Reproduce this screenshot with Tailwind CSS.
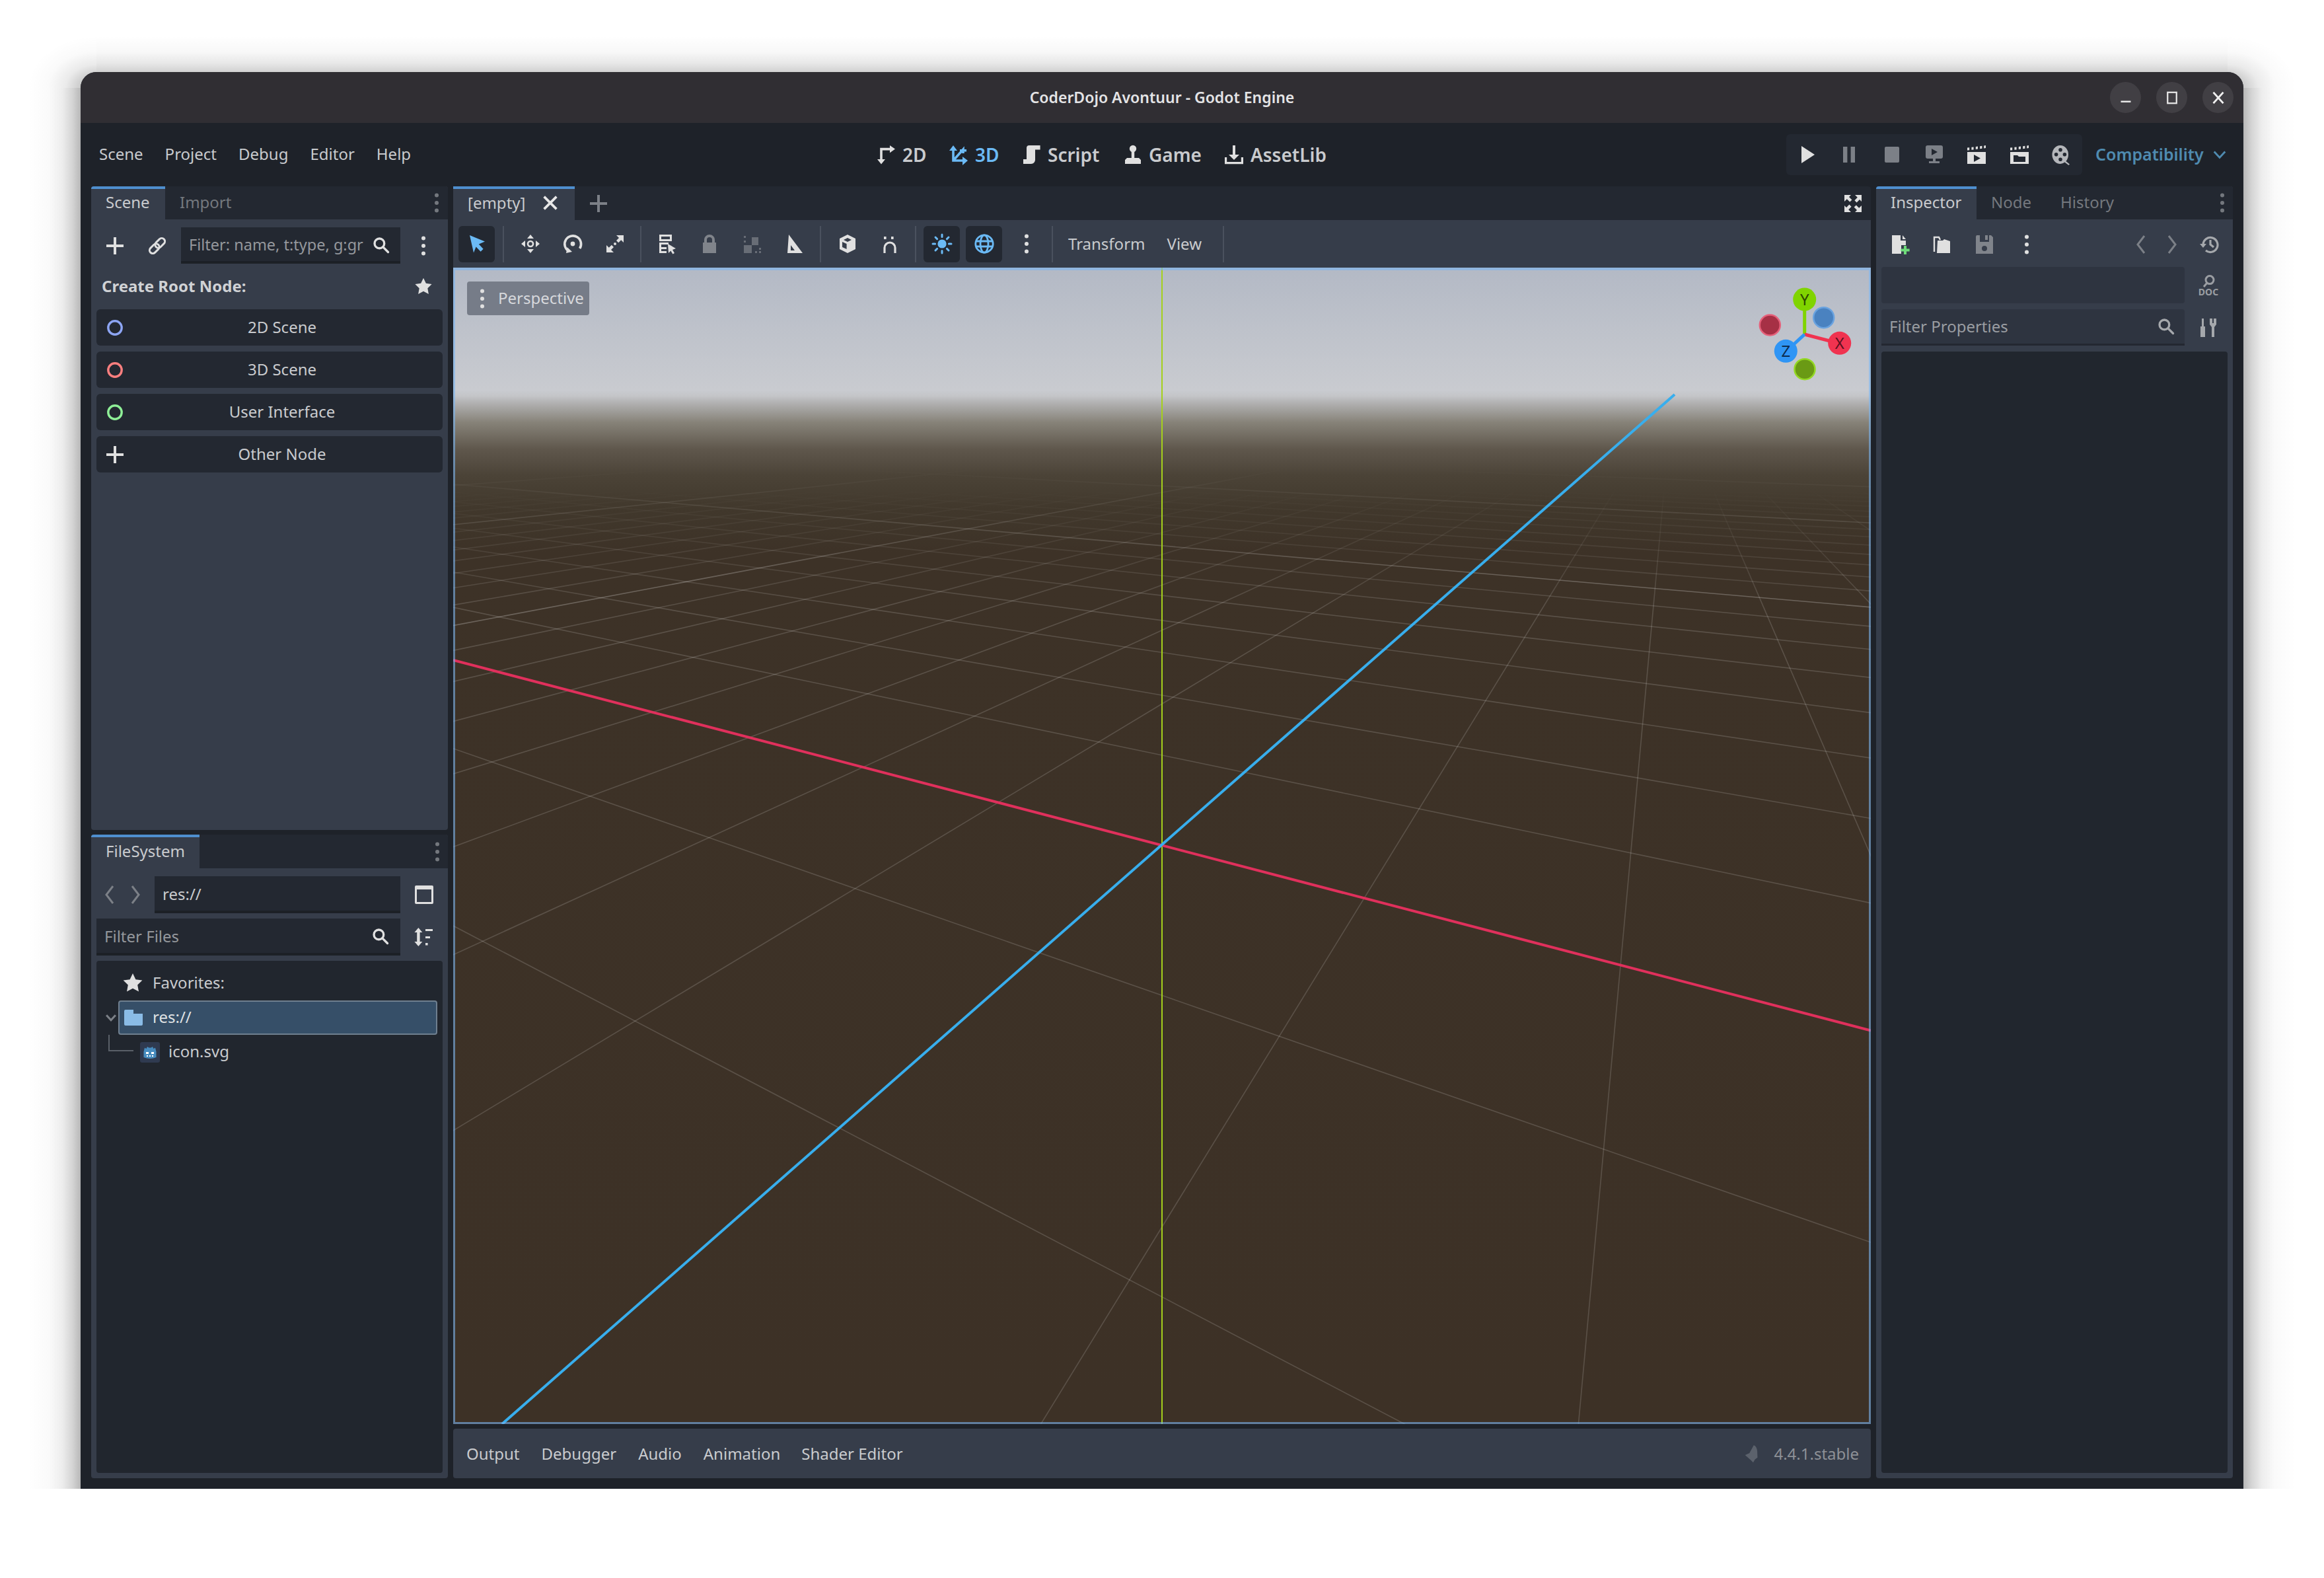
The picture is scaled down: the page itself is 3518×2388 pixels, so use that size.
<!DOCTYPE html>
<html lang="en">
<head>
  <meta charset="UTF-8">
  <title>CoderDojo Avontuur - Godot Engine</title>
  <script src="https://cdn.jsdelivr.net/npm/@tailwindcss/browser@4"></script>
</head>
<body class="relative bg-white font-['Noto_Sans',sans-serif] text-[24px] text-[#c9cbce]">
  <!-- shared icons, 16 unit grid -->
  <svg class="hidden">
    <symbol id="plus" viewBox="0 0 16 16"><path fill="currentColor" d="M7 1.5h2V7h5.5v2H9v5.5H7V9H1.5V7H7z"/></symbol>
    <symbol id="dots" viewBox="0 0 16 16"><g fill="currentColor"><circle cx="8" cy="2.2" r="1.5"/><circle cx="8" cy="8" r="1.5"/><circle cx="8" cy="13.8" r="1.5"/></g></symbol>
    <symbol id="search" viewBox="0 0 16 16"><g fill="none" stroke="currentColor" stroke-width="1.9"><circle cx="6.5" cy="6.5" r="4.2"/><path stroke-linecap="round" d="M9.8 9.8 14 14"/></g></symbol>
    <symbol id="star" viewBox="0 0 16 16"><path fill="currentColor" d="M8 1l2.2 4.6 5 .7-3.6 3.5.9 5L8 12.4l-4.5 2.4.9-5L.8 6.3l5-.7z"/></symbol>
    <symbol id="ring" viewBox="0 0 16 16"><circle cx="8" cy="8" r="5.1" fill="none" stroke="currentColor" stroke-width="1.7"/></symbol>
    <symbol id="left" viewBox="0 0 16 16"><path fill="none" stroke="currentColor" stroke-width="1.5" d="M10.5 1.5 5.5 8l5 6.5"/></symbol>
    <symbol id="right" viewBox="0 0 16 16"><path fill="none" stroke="currentColor" stroke-width="1.5" d="M5.5 1.5l5 6.5-5 6.5"/></symbol>
    <symbol id="clapper" viewBox="0 0 16 16"><path fill="currentColor" d="M1 6h14v9H1z"/><path fill="currentColor" d="M1 2.8l1.6-.2v2L1 4.800zM4.200 2.400l1.600-.2v2l-1.600.2zM7.400 2l1.600-.2v2l-1.600.2zM10.600 1.600l1.600-.2v2l-1.600.2zM13.600 1.200l1.400-.2v2l-1.400.2z"/></symbol>
  </svg>

  <!-- window drop shadow, gradient strips round the window -->
  <svg class="absolute left-0 top-0 h-[2388px] w-[3518px]" viewBox="0 0 3518 2388">
    <defs>
      <linearGradient id="shL" x1="1" y1="0" x2="0" y2="0"><stop offset="0" stop-opacity="0.28"/><stop offset="0.15" stop-opacity="0.17"/><stop offset="0.35" stop-opacity="0.07"/><stop offset="0.6" stop-opacity="0.02"/><stop offset="1" stop-opacity="0"/></linearGradient>
      <linearGradient id="shR" x1="0" y1="0" x2="1" y2="0"><stop offset="0" stop-opacity="0.28"/><stop offset="0.15" stop-opacity="0.17"/><stop offset="0.35" stop-opacity="0.07"/><stop offset="0.6" stop-opacity="0.02"/><stop offset="1" stop-opacity="0"/></linearGradient>
      <linearGradient id="shT" x1="0" y1="1" x2="0" y2="0"><stop offset="0" stop-opacity="0.18"/><stop offset="0.25" stop-opacity="0.09"/><stop offset="0.55" stop-opacity="0.03"/><stop offset="1" stop-opacity="0"/></linearGradient>
      <linearGradient id="shB" x1="0" y1="0" x2="0" y2="1"><stop offset="0" stop-opacity="0.3"/><stop offset="0.12" stop-opacity="0.17"/><stop offset="0.3" stop-opacity="0.09"/><stop offset="0.55" stop-opacity="0.04"/><stop offset="0.8" stop-opacity="0.015"/><stop offset="1" stop-opacity="0"/></linearGradient>
      <radialGradient id="shTL" cx="1" cy="1" r="1"><stop offset="0.24" stop-opacity="0.2"/><stop offset="0.45" stop-opacity="0.08"/><stop offset="0.7" stop-opacity="0.02"/><stop offset="1" stop-opacity="0"/></radialGradient>
      <radialGradient id="shTR" cx="0" cy="1" r="1"><stop offset="0.24" stop-opacity="0.2"/><stop offset="0.45" stop-opacity="0.08"/><stop offset="0.7" stop-opacity="0.02"/><stop offset="1" stop-opacity="0"/></radialGradient>
      <radialGradient id="shBL" cx="1" cy="0" r="1"><stop offset="0" stop-opacity="0.26"/><stop offset="0.15" stop-opacity="0.14"/><stop offset="0.35" stop-opacity="0.06"/><stop offset="0.6" stop-opacity="0.018"/><stop offset="1" stop-opacity="0"/></radialGradient>
      <radialGradient id="shBR" cx="0" cy="0" r="1"><stop offset="0" stop-opacity="0.26"/><stop offset="0.15" stop-opacity="0.14"/><stop offset="0.35" stop-opacity="0.06"/><stop offset="0.6" stop-opacity="0.018"/><stop offset="1" stop-opacity="0"/></radialGradient>
    </defs>
    <rect x="42" y="133" width="80" height="2120" fill="url(#shL)"/>
    <rect x="3396" y="133" width="80" height="2120" fill="url(#shR)"/>
    <rect x="146" y="54" width="3226" height="55" fill="url(#shT)"/>
    <rect x="122" y="2253" width="3274" height="130" fill="url(#shB)"/>
    <rect x="42" y="54" width="104" height="79" fill="url(#shTL)"/>
    <rect x="3372" y="54" width="104" height="79" fill="url(#shTR)"/>
    <rect x="42" y="2253" width="80" height="130" fill="url(#shBL)"/>
    <rect x="3396" y="2253" width="80" height="130" fill="url(#shBR)"/>
  </svg>

  <div class="relative pl-[122px] pt-[109px]">
    <div class="flex h-[2144px] w-[3274px] flex-col overflow-hidden rounded-t-[24px] bg-[#1e2229]">

      <!-- title bar -->
      <div class="relative flex h-[77px] shrink-0 items-center justify-center bg-[#302e33]">
        <span class="text-[23px] font-semibold text-[#e4e4e6]">CoderDojo Avontuur - Godot Engine</span>
        <div class="absolute right-[15px] top-[15px] flex gap-[23px]">
          <div class="flex h-[47px] w-[47px] items-center justify-center rounded-full bg-[#413f44]"><svg class="h-[24px] w-[24px]" viewBox="0 0 16 16"><path fill="#e8e8e8" d="M3 11h10v1.600H3z"/></svg></div>
          <div class="flex h-[47px] w-[47px] items-center justify-center rounded-full bg-[#413f44]"><svg class="h-[24px] w-[24px]" viewBox="0 0 16 16"><rect x="3.500" y="2.500" width="9" height="11" fill="none" stroke="#e8e8e8" stroke-width="1.500"/></svg></div>
          <div class="flex h-[47px] w-[47px] items-center justify-center rounded-full bg-[#413f44]"><svg class="h-[24px] w-[24px]" viewBox="0 0 16 16"><path fill="none" stroke="#f0f0f0" stroke-width="1.800" d="M3 2.500l10 11M13 2.500l-10 11"/></svg></div>
        </div>
      </div>

      <!-- menu bar -->
      <div class="flex h-[96px] shrink-0 items-center">
        <div class="flex w-[1204px] shrink-0 gap-[33px] pb-[2px] pl-[28px]">
          <span>Scene</span><span>Project</span><span>Debug</span><span>Editor</span><span>Help</span>
        </div>
        <div class="flex items-center whitespace-nowrap text-[28px] font-semibold">
          <svg class="h-[32px] w-[32px] text-[#e0e0e0]" viewBox="0 0 16 16"><path fill="none" stroke="currentColor" stroke-width="1.800" d="M4 12.500V3.800h7"/><path fill="currentColor" d="M10.500 1l4 2.800-4 2.800zM1 11.500h6l-3 3.800z"/></svg>
          <span class="ml-[8px] w-[69px]">2D</span>
          <svg class="h-[32px] w-[32px] text-[#6bbaf5]" viewBox="0 0 16 16"><path fill="none" stroke="currentColor" stroke-width="1.800" d="M4 5v7.500h7M4 12.500 11.500 4v3"/><path fill="currentColor" d="M4 1l3 4H1zM15 12.500l-4-3v6.500zM9 4h5v1.800H9z"/></svg>
          <span class="ml-[9px] w-[69px] text-[#6bbaf5]">3D</span>
          <svg class="h-[32px] w-[32px] text-[#e0e0e0]" viewBox="0 0 16 16"><path fill="currentColor" d="M6.500 1h8.300v3.300H11V12a3 3 0 0 1-3 3H2V11.500h2.500V3A2 2 0 0 1 6.500 1z"/></svg>
          <span class="ml-[9px] w-[113px]">Script</span>
          <svg class="h-[32px] w-[32px] text-[#e0e0e0]" viewBox="0 0 16 16"><circle cx="8" cy="3.500" r="2.600" fill="currentColor"/><path fill="currentColor" d="M6.900 5h2.200v5.500H6.900zM3.500 10.500h9l1.500 1.500v3H2v-3z"/></svg>
          <span class="ml-[8px] w-[113px]">Game</span>
          <svg class="h-[32px] w-[32px] text-[#e0e0e0]" viewBox="0 0 16 16"><path fill="currentColor" d="M7 1h2v7h3l-4 4-4-4h3z"/><path fill="none" stroke="currentColor" stroke-width="1.600" d="M1.800 10v4.300h12.400V10"/></svg>
          <span class="ml-[9px]">AssetLib</span>
        </div>
        <div class="ml-auto flex h-[62px] w-[448px] items-center justify-between rounded-md bg-[#232831] px-[15px] text-[#e0e0e0]">
          <svg class="h-[32px] w-[32px]" viewBox="0 0 16 16"><path fill="currentColor" d="M4 1.500v13l10-6.500z"/></svg>
          <svg class="h-[32px] w-[32px] text-[#7c8087]" viewBox="0 0 16 16"><path fill="currentColor" d="M3.500 2h3.200v12H3.500zM9.300 2h3.200v12H9.300z"/></svg>
          <svg class="h-[32px] w-[32px] text-[#7c8087]" viewBox="0 0 16 16"><rect x="2.500" y="2" width="11" height="12" rx="1" fill="currentColor"/></svg>
          <svg class="h-[32px] w-[32px] text-[#7c8087]" viewBox="0 0 16 16"><path fill="currentColor" fill-rule="evenodd" d="M3 1h10a1.500 1.500 0 0 1 1.500 1.500v7A1.500 1.500 0 0 1 13 11H9v2h3v1.500H4V13h3v-2H3a1.500 1.500 0 0 1-1.500-1.500v-7A1.500 1.500 0 0 1 3 1zm3 2.500v5l4.500-2.500z"/></svg>
          <svg class="h-[32px] w-[32px]" viewBox="0 0 16 16"><use href="#clapper"/><path fill="#232831" d="M6 8v5.500l5-2.750z"/></svg>
          <svg class="h-[32px] w-[32px]" viewBox="0 0 16 16"><use href="#clapper"/><path fill="#232831" d="M3.500 8.500h3l1 1h5v4h-9z"/></svg>
          <svg class="h-[32px] w-[32px] text-[#b4b6ba]" viewBox="0 0 16 16"><path fill="currentColor" fill-rule="evenodd" d="M7 1a6 7 0 0 1 6 7 6 7 0 0 1-1.800 5l2.800 2.200-.8.800-3-2.300A6 7 0 1 1 7 1zm0 2a1.400 1.400 0 1 0 0 2.800A1.400 1.400 0 0 0 7 3zM3.800 6.500a1.400 1.400 0 1 0 0 2.800 1.400 1.400 0 0 0 0-2.800zm6.400 0a1.400 1.400 0 1 0 0 2.800 1.400 1.400 0 0 0 0-2.800zM7 10.200a1.400 1.400 0 1 0 0 2.800 1.400 1.400 0 0 0 0-2.800z"/></svg>
        </div>
        <div class="ml-[20px] mr-[24px] flex w-[200px] shrink-0 items-center justify-between text-[25px] font-semibold text-[#4f8bb0]">
          <span>Compatibility</span>
          <svg class="h-[24px] w-[24px]" viewBox="0 0 16 16"><path fill="none" stroke="currentColor" stroke-width="1.900" d="M2.500 5 8 11l5.500-6"/></svg>
        </div>
      </div>

      <!-- docks -->
      <div class="flex min-h-0 flex-1 gap-[8px] px-[16px] pb-[16px]">

        <!-- left dock -->
        <div class="flex w-[540px] shrink-0 flex-col gap-[7px]">
          <div class="flex h-[974px] flex-col overflow-hidden rounded-[4px] bg-[#363d4a]">
            <div class="flex h-[50px] shrink-0 items-center bg-[#232831]">
              <div class="flex h-full w-[112px] items-center border-t-[4px] border-[#4f8fcf] bg-[#363d4a] pb-[6px] pl-[22px]">Scene</div>
              <span class="mb-[3px] ml-[22px] text-[#74787e]">Import</span>
              <svg class="ml-auto mr-[1px] h-[32px] w-[32px] text-[#74787e]"><use href="#dots"/></svg>
            </div>
            <div class="mt-[12px] flex h-[55px] shrink-0 items-center text-[#e0e0e0]">
              <svg class="ml-[20px] h-[32px] w-[32px]"><use href="#plus"/></svg>
              <svg class="ml-[32px] h-[32px] w-[32px]" viewBox="0 0 16 16"><g transform="rotate(-45 8 8)" fill="none" stroke="currentColor" stroke-width="1.500"><rect x="0.800" y="5.600" width="8.400" height="4.800" rx="2.400"/><rect x="6.800" y="5.600" width="8.400" height="4.800" rx="2.400"/></g></svg>
              <div class="ml-[20px] flex h-[55px] w-[332px] items-center whitespace-nowrap border-b-[4px] border-[#1c2026] bg-[#232831] pl-[12px] pt-[3px] text-[#94979c]">
                <span class="w-[277px] text-[23.500px]">Filter: name, t:type, g:gr</span>
                <svg class="h-[28px] w-[28px] text-[#e0e0e0]"><use href="#search"/></svg>
              </div>
              <svg class="ml-[19px] h-[32px] w-[32px]"><use href="#dots"/></svg>
            </div>
            <div class="flex h-[69px] shrink-0 items-center px-[16px] pb-[2px] font-bold text-[#d0d2d5]">
              <span>Create Root Node:</span>
              <svg class="ml-auto mr-[7px] h-[28px] w-[28px] text-[#e0e0e0]"><use href="#star"/></svg>
            </div>
            <div class="flex flex-col gap-[9px] px-[8px]">
              <div class="flex h-[55px] items-center rounded-[6px] bg-[#232831] pl-[12px] pr-[6px]"><svg class="h-[32px] w-[32px] text-[#8da5f3]"><use href="#ring"/></svg><span class="flex-1 pb-[2px] text-center">2D Scene</span></div>
              <div class="flex h-[55px] items-center rounded-[6px] bg-[#232831] pl-[12px] pr-[6px]"><svg class="h-[32px] w-[32px] text-[#fc7f7f]"><use href="#ring"/></svg><span class="flex-1 pb-[2px] text-center">3D Scene</span></div>
              <div class="flex h-[55px] items-center rounded-[6px] bg-[#232831] pl-[12px] pr-[6px]"><svg class="h-[32px] w-[32px] text-[#8eef97]"><use href="#ring"/></svg><span class="flex-1 pb-[2px] text-center">User Interface</span></div>
              <div class="flex h-[55px] items-center rounded-[6px] bg-[#232831] pl-[12px] pr-[6px]"><svg class="h-[32px] w-[32px] text-[#e0e0e0]"><use href="#plus"/></svg><span class="flex-1 pb-[2px] text-center">Other Node</span></div>
            </div>
          </div>

          <div class="flex min-h-0 flex-1 flex-col overflow-hidden rounded-[4px] bg-[#363d4a]">
            <div class="flex h-[51px] shrink-0 items-center bg-[#232831]">
              <div class="flex h-full w-[164px] items-center border-t-[4px] border-[#4f8fcf] bg-[#363d4a] pb-[5px] pl-[22px]">FileSystem</div>
              <svg class="ml-auto h-[32px] w-[32px] text-[#74787e]"><use href="#dots"/></svg>
            </div>
            <div class="mt-[12px] flex h-[56px] shrink-0 items-center text-[#7c8087]">
              <svg class="ml-[12px] h-[32px] w-[32px]"><use href="#left"/></svg>
              <svg class="ml-[7px] h-[32px] w-[32px]"><use href="#right"/></svg>
              <div class="ml-[13px] flex h-[56px] w-[372px] items-center border-b-[4px] border-[#1c2026] bg-[#232831] pl-[12px] pt-[2px] text-[#c9cbce]">res://</div>
              <svg class="ml-[20px] h-[32px] w-[32px] text-[#e0e0e0]" viewBox="0 0 16 16"><rect x="1" y="1" width="14" height="14" rx="1" fill="currentColor"/><rect x="2.500" y="4" width="11" height="9.500" fill="#363d4a"/></svg>
            </div>
            <div class="mt-[8px] flex h-[56px] shrink-0 items-center">
              <div class="ml-[8px] flex h-[56px] w-[460px] items-center border-b-[4px] border-[#1c2026] bg-[#232831] pl-[12px] pt-[2px] text-[#94979c]">
                <span>Filter Files</span>
                <svg class="ml-auto mr-[16px] h-[28px] w-[28px] text-[#e0e0e0]"><use href="#search"/></svg>
              </div>
              <svg class="ml-[19px] h-[32px] w-[32px] text-[#e0e0e0]" viewBox="0 0 16 16"><path fill="currentColor" d="M4.200 1l3 3.500H5.300v7h1.900l-3 3.500-3-3.500h1.900v-7H1.200zM9.500 2h5.500v1.500H9.500zM9.500 7.500h3.500V9H9.500zM9.500 12.500h1.800v1.800H9.500z"/></svg>
            </div>
            <div class="mx-[8px] mb-[8px] mt-[8px] flex min-h-0 flex-1 flex-col rounded-[4px] bg-[#21262e] pt-[9px]">
              <div class="flex h-[51px] items-center pb-[3px]">
                <svg class="ml-[39px] h-[32px] w-[32px] text-[#e0e0e0]"><use href="#star"/></svg>
                <span class="ml-[14px]">Favorites:</span>
              </div>
              <div class="flex h-[52px] items-center">
                <svg class="ml-[12px] h-[20px] w-[20px] text-[#7c8087]" viewBox="0 0 16 16"><path fill="none" stroke="currentColor" stroke-width="2.400" d="M2.500 5 8 11l5.500-6"/></svg>
                <div class="ml-[1px] flex h-[52px] w-[483px] items-center rounded-[4px] border-[2px] border-[#6f7f8f] bg-[#364f68]">
                  <svg class="ml-[7px] h-[24px] w-[28px] text-[#8abce6]" viewBox="0 0 28 24"><path fill="currentColor" d="M0 2a2 2 0 0 1 2-2h12v6h14v16a2 2 0 0 1-2 2H2a2 2 0 0 1-2-2z"/></svg>
                  <span class="mb-[2px] ml-[15px] text-[#dfe1e3]">res://</span>
                </div>
              </div>
              <div class="relative flex h-[52px] items-center">
                <!-- tree connector -->
                <div class="absolute left-[18px] top-[0px] h-[25px] w-[38px] border-b-[2px] border-l-[2px] border-[#5a6068]"></div>
                <svg class="ml-[66px] h-[31px] w-[30px]" viewBox="0 0 30 31"><rect width="30" height="31" rx="3" fill="#2f3a50"/><path fill="#478cbf" d="M7 8.500l2.500 1.500 1.500-3 2.500 1.500h3L19 7l1.500 3L23 8.500l1.500 6v8.500q-9.500 4-19 0V14.500z"/><g fill="#ffffff"><rect x="9" y="15" width="4" height="3"/><rect x="17" y="15" width="4" height="3"/><rect x="10" y="20" width="2" height="2"/><rect x="14" y="20" width="2" height="2"/><rect x="18" y="20" width="2" height="2"/></g></svg>
                <span class="mb-[2px] ml-[13px]">icon.svg</span>
              </div>
            </div>
          </div>
        </div>

        <!-- center -->
        <div class="flex w-[2146px] shrink-0 flex-col">
          <div class="flex h-[51px] shrink-0 items-center rounded-t-[4px] bg-[#232831]">
            <div class="flex h-full w-[184px] items-center border-t-[4px] border-[#4f8fcf] bg-[#363d4a] pb-[5px] pl-[22px]">
              <span>[empty]</span>
              <svg class="ml-[23px] h-[30px] w-[30px] text-[#e8e8e8]" viewBox="0 0 16 16"><path fill="none" stroke="currentColor" stroke-width="2" d="M3 3l10 10M13 3 3 13"/></svg>
            </div>
            <svg class="ml-[20px] h-[32px] w-[32px] text-[#7c8087]"><use href="#plus"/></svg>
            <svg class="ml-auto mr-[11px] h-[32px] w-[32px] text-[#e0e0e0]" viewBox="0 0 16 16"><path fill="currentColor" d="M1.500 1.500h5L5 3l2.200 2.200L5.600 6.800 3.400 4.600 1.500 6.500zM14.500 1.500v5L13 5l-2.200 2.200-1.600-1.600L11.400 3.400 9.500 1.500zM1.500 14.500v-5L3 11l2.200-2.200 1.600 1.600L4.600 12.600l1.900 1.900zM14.500 14.500h-5L11 13l-2.200-2.200 1.600-1.600 2.200 2.200 1.900-1.900z"/></svg>
          </div>

          <!-- viewport toolbar -->
          <div class="flex h-[72px] shrink-0 items-center bg-[#363d4a] pl-[8px] text-[#e0e0e0]">
            <div class="flex h-[55px] w-[55px] items-center justify-center rounded-md bg-[#232831]"><svg class="h-[32px] w-[32px] text-[#6bbaf5]" viewBox="0 0 16 16"><path fill="currentColor" d="M2.500 1.500 14 6.300l-4.600 1.900 3.400 3.700-2 2-3.500-3.700-1.800 4.500z"/></svg></div>
            <div class="mx-[12px] h-[55px] w-[2px] bg-[#4a515e]"></div>
            <div class="flex gap-[9px]">
              <div class="flex h-[55px] w-[55px] items-center justify-center"><svg class="h-[32px] w-[32px]" viewBox="0 0 16 16"><g fill="currentColor"><path d="M8 1l2.500 3h-5zM8 15l-2.500-3h5zM1 8l3-2.500v5zM15 8l-3 2.500v-5z"/></g><circle cx="8" cy="8" r="2" fill="none" stroke="currentColor" stroke-width="1.300"/></svg></div>
              <div class="flex h-[55px] w-[55px] items-center justify-center"><svg class="h-[32px] w-[32px]" viewBox="0 0 16 16"><path fill="none" stroke="currentColor" stroke-width="1.800" d="M5 13.500A6.200 6.200 0 1 1 13.300 11.500"/><circle cx="8" cy="8" r="1.700" fill="currentColor"/><path fill="currentColor" d="M3.800 10.500 7.500 14l-4.500 1z"/></svg></div>
              <div class="flex h-[55px] w-[55px] items-center justify-center"><svg class="h-[32px] w-[32px]" viewBox="0 0 16 16"><path fill="currentColor" d="M9 1.500h5.500V7l-1.900-1.900-2 2-1.600-1.600 2-2zM7 14.500H1.500V9l1.900 1.900 2-2 1.600 1.600-2 2z"/><circle cx="8" cy="8" r="1" fill="currentColor"/></svg></div>
            </div>
            <div class="mx-[11px] h-[55px] w-[2px] bg-[#4a515e]"></div>
            <div class="flex gap-[9px]">
              <div class="flex h-[55px] w-[55px] items-center justify-center"><svg class="h-[32px] w-[32px]" viewBox="0 0 16 16"><path fill="currentColor" fill-rule="evenodd" d="M2 1h9.500v5H2zm1.500 1.500v2H10v-2zM2 7h7v1.500H3.500v2H7.500V12H3.500v1.500H7.500V15H2z"/><path fill="currentColor" d="M8.500 8 14.500 11.500l-2.500 1 1.500 2.500-1.300.8-1.500-2.500-1.700 1.700z"/></svg></div>
              <div class="flex h-[55px] w-[55px] items-center justify-center"><svg class="h-[32px] w-[32px] text-[#80848b]" viewBox="0 0 16 16"><path fill="currentColor" fill-rule="evenodd" d="M8 1a4 4 0 0 1 4 4v2h1v8H3V7h1V5a4 4 0 0 1 4-4zm0 2a2 2 0 0 0-2 2v2h4V5a2 2 0 0 0-2-2z"/></svg></div>
              <div class="flex h-[55px] w-[55px] items-center justify-center"><svg class="h-[32px] w-[32px] text-[#686d76]" viewBox="0 0 16 16"><path fill="currentColor" d="M2 9h6v6H2zM8 3h5v6H8zM2 2h1.500v1.500H2zM2 5.500h1.500V7H2zM13.500 11H15v1.500h-1.500zM13.500 13.500H15V15h-1.500zM10.500 13.500H12V15h-1.500z"/></svg></div>
              <div class="flex h-[55px] w-[55px] items-center justify-center"><svg class="h-[32px] w-[32px]" viewBox="0 0 16 16"><path fill="currentColor" fill-rule="evenodd" d="M4 1l10.500 14H3zm1.500 8v4h3z"/></svg></div>
            </div>
            <div class="mx-[12px] h-[55px] w-[2px] bg-[#4a515e]"></div>
            <div class="flex gap-[9px]">
              <div class="flex h-[55px] w-[55px] items-center justify-center"><svg class="h-[32px] w-[32px]" viewBox="0 0 16 16"><path fill="currentColor" fill-rule="evenodd" d="M8 1l6 3v8l-6 3-6-3V4zm0 2.500L5 5l3 1.500L11 5zM7.300 8 4 6.500v4L7.300 12z"/></svg></div>
              <div class="flex h-[55px] w-[55px] items-center justify-center"><svg class="h-[32px] w-[32px]" viewBox="0 0 16 16"><path fill="none" stroke="currentColor" stroke-width="1.600" d="M4 15v-4a4 4 0 0 1 8 0v4"/><path fill="currentColor" d="M3.500 2.500h1.800v2H3.500zM9 2.500h1.800v2H9z"/></svg></div>
            </div>
            <div class="mx-[11px] h-[55px] w-[2px] bg-[#4a515e]"></div>
            <div class="flex gap-[9px]">
              <div class="flex h-[55px] w-[55px] items-center justify-center rounded-md bg-[#232831]"><svg class="h-[32px] w-[32px] text-[#6bbaf5]" viewBox="0 0 16 16"><circle cx="8" cy="8" r="3.300" fill="currentColor"/><path fill="none" stroke="currentColor" stroke-width="1.500" stroke-linecap="round" d="M8 1v1.800M8 13.200V15M1 8h1.800M13.200 8H15M3 3l1.300 1.300M11.700 11.700 13 13M13 3l-1.300 1.300M4.300 11.700 3 13"/></svg></div>
              <div class="flex h-[55px] w-[55px] items-center justify-center rounded-md bg-[#232831]"><svg class="h-[32px] w-[32px] text-[#6bbaf5]" viewBox="0 0 16 16"><g fill="none" stroke="currentColor" stroke-width="1.400"><circle cx="8" cy="8" r="6.600"/><ellipse cx="8" cy="8" rx="3" ry="6.600"/><path d="M1.500 6h13M1.500 10h13"/></g></svg></div>
              <div class="flex h-[55px] w-[55px] items-center justify-center"><svg class="h-[32px] w-[32px]"><use href="#dots"/></svg></div>
            </div>
            <div class="ml-[11px] h-[55px] w-[2px] bg-[#4a515e]"></div>
            <span class="ml-[23px] text-[#c9cbce]">Transform</span>
            <span class="ml-[33px] text-[#c9cbce]">View</span>
            <div class="ml-[32px] h-[55px] w-[2px] bg-[#4a515e]"></div>
          </div>

          <!-- 3D viewport: free canvas, drawn in page coordinates -->
          <div class="relative h-[1750px] shrink-0 overflow-hidden">
            <svg id="view" class="absolute inset-0 h-full w-full" viewBox="686 405 2146 1750">
              <defs>
                <linearGradient id="env" gradientUnits="userSpaceOnUse" x1="0" y1="405" x2="0" y2="2155">
                  <stop offset="0" stop-color="#b3b9c5"/>
                  <stop offset="0.106" stop-color="#c9cbd0"/>
                  <stop offset="0.111" stop-color="#c4c5c8"/>
                  <stop offset="0.116" stop-color="#b4b4b5"/>
                  <stop offset="0.134" stop-color="#868278"/>
                  <stop offset="0.157" stop-color="#5f574c"/>
                  <stop offset="0.180" stop-color="#4b4337"/>
                  <stop offset="0.208" stop-color="#41382c"/>
                  <stop offset="0.246" stop-color="#3d3227"/>
                  <stop offset="1" stop-color="#3d3126"/>
                </linearGradient>
                <linearGradient id="minor" gradientUnits="userSpaceOnUse" x1="0" y1="740" x2="0" y2="920">
                  <stop offset="0" stop-color="#fff" stop-opacity="0"/>
                  <stop offset="1" stop-color="#fff" stop-opacity="0.15"/>
                </linearGradient>
                <linearGradient id="major" gradientUnits="userSpaceOnUse" x1="0" y1="710" x2="0" y2="880">
                  <stop offset="0" stop-color="#fff" stop-opacity="0"/>
                  <stop offset="1" stop-color="#fff" stop-opacity="0.24"/>
                </linearGradient>
              </defs>
              <rect x="686" y="405" width="2146" height="1750" fill="url(#env)"/>
              <g id="grid" stroke-width="1.600"></g>
              <path d="M1759 405V2155" stroke="#a4d01c" stroke-width="2"/>
              <path d="M686 999 2832 1559.500" stroke="#e0305c" stroke-width="4"/>
              <path d="M760 2155 2535 597" stroke="#38aeed" stroke-width="4"/>
              <!-- orientation gizmo -->
              <path d="M2731.700 506V465" stroke="#80d400" stroke-width="5"/>
              <path d="M2731.700 506 2770 516" stroke="#f03350" stroke-width="5"/>
              <path d="M2731.700 506 2710 526" stroke="#2f95f5" stroke-width="5"/>
              <circle cx="2760.700" cy="480.700" r="15.500" fill="#4a82c0" stroke="#6aa3e0" stroke-width="2.500"/>
              <circle cx="2679.300" cy="492" r="15.500" fill="#a63045" stroke="#e5607a" stroke-width="2.500"/>
              <circle cx="2732" cy="558.700" r="15.500" fill="#6a9a14" stroke="#94d824" stroke-width="2.500"/>
              <circle cx="2731.700" cy="453" r="17.500" fill="#80d400"/>
              <circle cx="2784.700" cy="519.300" r="17.500" fill="#f03350"/>
              <circle cx="2703.300" cy="531.300" r="17.500" fill="#2f95f5"/>
              <g font-family="Noto Sans, sans-serif" font-size="24" text-anchor="middle">
                <text x="2731.700" y="461.500" fill="#2c4800">Y</text>
                <text x="2784.700" y="528" fill="#5c1020">X</text>
                <text x="2703.300" y="540" fill="#0c2c50">Z</text>
              </g>
            </svg>
            <div class="absolute inset-0 border-[3px] border-t-[4px] border-[#7ab4f0]/60"></div>
            <div class="absolute left-[21px] top-[21px] flex h-[51px] w-[185px] items-center rounded-[4px] bg-[#767c88] text-[#d6d8dc]">
              <svg class="ml-[7px] h-[32px] w-[32px] text-[#e0e0e0]"><use href="#dots"/></svg>
              <span class="mb-[2px] ml-[8px]">Perspective</span>
            </div>
          </div>

          <!-- bottom panel -->
          <div class="mt-[7px] flex min-h-0 flex-1 items-center rounded-[4px] bg-[#363d4a] pl-[20px] pr-[18px]">
            <span>Output</span>
            <span class="ml-[33px]">Debugger</span>
            <span class="ml-[33px]">Audio</span>
            <span class="ml-[33px]">Animation</span>
            <span class="ml-[32px]">Shader Editor</span>
            <svg class="ml-auto h-[30px] w-[30px] text-[#5c626c]" viewBox="0 0 16 16"><path fill="currentColor" d="M9.500 1q2.500 1 2.800 5l.2 5-2 1.500-1.500 2.500-1.500-1.500L2.500 9 6 7.500z"/></svg>
            <span class="ml-[18px] text-[#8d9096]">4.4.1.stable</span>
          </div>
        </div>

        <!-- right dock -->
        <div class="flex min-w-0 flex-1 flex-col overflow-hidden rounded-[4px] bg-[#363d4a]">
          <div class="flex h-[50px] shrink-0 items-center bg-[#232831]">
            <div class="flex h-full w-[152px] items-center border-t-[4px] border-[#4f8fcf] bg-[#363d4a] pb-[6px] pl-[22px]">Inspector</div>
            <span class="mb-[3px] ml-[22px] text-[#74787e]">Node</span>
            <span class="mb-[3px] ml-[44px] text-[#74787e]">History</span>
            <svg class="ml-auto h-[32px] w-[32px] text-[#74787e]"><use href="#dots"/></svg>
          </div>
          <div class="flex h-[72px] shrink-0 items-center pt-[4px] text-[#e0e0e0]">
            <svg class="ml-[20px] h-[32px] w-[32px]" viewBox="0 0 16 16"><path fill="currentColor" d="M2 1h6.500v4h4v3.500H9V15H2z"/><path fill="currentColor" d="M10 1l2.500 3H10z"/><path fill="#6fdc7a" d="M11 9h2v2.300h2.300v2H13V15.500h-2v-2.200H8.700v-2H11z"/></svg>
            <svg class="ml-[32px] h-[32px] w-[32px]" viewBox="0 0 16 16"><path fill="none" stroke="currentColor" stroke-width="1.200" d="M2 13.500V2.500h3.500l1 2"/><path fill="currentColor" d="M4 14.500 4.500 5h4l1-1 4.500 1.500v9z"/></svg>
            <svg class="ml-[32px] h-[32px] w-[32px] text-[#80848b]" viewBox="0 0 16 16"><path fill="currentColor" fill-rule="evenodd" d="M2 1h2.500v5h7V1H13l1.500 1.500V15h-13V2zM8.500 1h2v3.500h-2zM8 9a2 2 0 1 0 0 4 2 2 0 0 0 0-4z"/></svg>
            <svg class="ml-[32px] h-[32px] w-[32px]"><use href="#dots"/></svg>
            <svg class="ml-[141px] h-[32px] w-[32px] text-[#7c8087]"><use href="#left"/></svg>
            <svg class="ml-[15px] h-[32px] w-[32px] text-[#7c8087]"><use href="#right"/></svg>
            <svg class="ml-[25px] h-[32px] w-[32px] text-[#a5a8ac]" viewBox="0 0 16 16"><path fill="none" stroke="currentColor" stroke-width="1.600" d="M3 8a5.500 5.500 0 1 1 2 4.500M8.500 4.500V8l2.500 2"/><path fill="currentColor" d="M.5 7.500h5l-2.500 3z"/></svg>
          </div>
          <div class="flex h-[55px] shrink-0 items-center">
            <div class="ml-[8px] h-[55px] w-[459px] rounded-[4px] bg-[#2e3440]"></div>
            <svg class="ml-[20px] h-[32px] w-[32px] text-[#9a9da2]" viewBox="0 0 16 16"><g fill="none" stroke="currentColor" stroke-width="1.500"><circle cx="9" cy="3.800" r="3"/><path d="M7 6 4.500 9"/></g><text x="8" y="15.500" text-anchor="middle" font-family="Noto Sans, sans-serif" font-size="7" font-weight="700" fill="currentColor">DOC</text></svg>
          </div>
          <div class="mt-[9px] flex h-[55px] shrink-0 items-center">
            <div class="ml-[8px] flex h-[55px] w-[459px] items-center rounded-t-[4px] border-b-[3px] border-[#232831] bg-[#2e3440] pl-[12px] text-[#9a9da2]">
              <span>Filter Properties</span>
              <svg class="ml-auto mr-[14px] h-[28px] w-[28px] text-[#a5a8ac]"><use href="#search"/></svg>
            </div>
            <svg class="ml-[20px] h-[32px] w-[32px] text-[#a5a8ac]" viewBox="0 0 16 16"><path fill="currentColor" d="M3 1h1.500v6h1V15H2V7h1zM11 1v3.500h1V1h2v4.500l-1.500 2V15h-2V7.500L9 5.500V1z"/></svg>
          </div>
          <div class="mx-[8px] mb-[8px] mt-[9px] min-h-0 flex-1 rounded-[4px] bg-[#21262e]"></div>
        </div>
      </div>
    </div>
  </div>

  <script>
    // floor grid, vanishing points and unit spacing read off the screenshot
    const O = [1759, 1279], VX = [-844, 600], VZ = [2532, 600];
    const grid = document.getElementById('grid');
    const along = (V, s, d) => [O[0] + (V[0] - O[0]) * s / (s + d), O[1] + (V[1] - O[1]) * s / (s + d)];

    function addLine(V, P, major) {
      const dx = P[0] - V[0], dy = P[1] - V[1];
      const k = 6000 / Math.hypot(dx, dy);
      const l = document.createElementNS('http://www.w3.org/2000/svg', 'line');
      l.setAttribute('x1', V[0]);
      l.setAttribute('y1', V[1]);
      l.setAttribute('x2', V[0] + dx * k);
      l.setAttribute('y2', V[1] + dy * k);
      l.setAttribute('stroke', major ? 'url(#major)' : 'url(#minor)');
      grid.appendChild(l);
    }

    for (let a = -8; a <= 96; a++) {
      if (a !== 0) addLine(VZ, along(VX, a, 9.5), a % 8 === 0);
    }
    for (let b = -4; b <= 96; b++) {
      if (b !== 0) addLine(VX, along(VZ, b, 5.17), b % 8 === 0);
    }
  </script>
</body>
</html>
